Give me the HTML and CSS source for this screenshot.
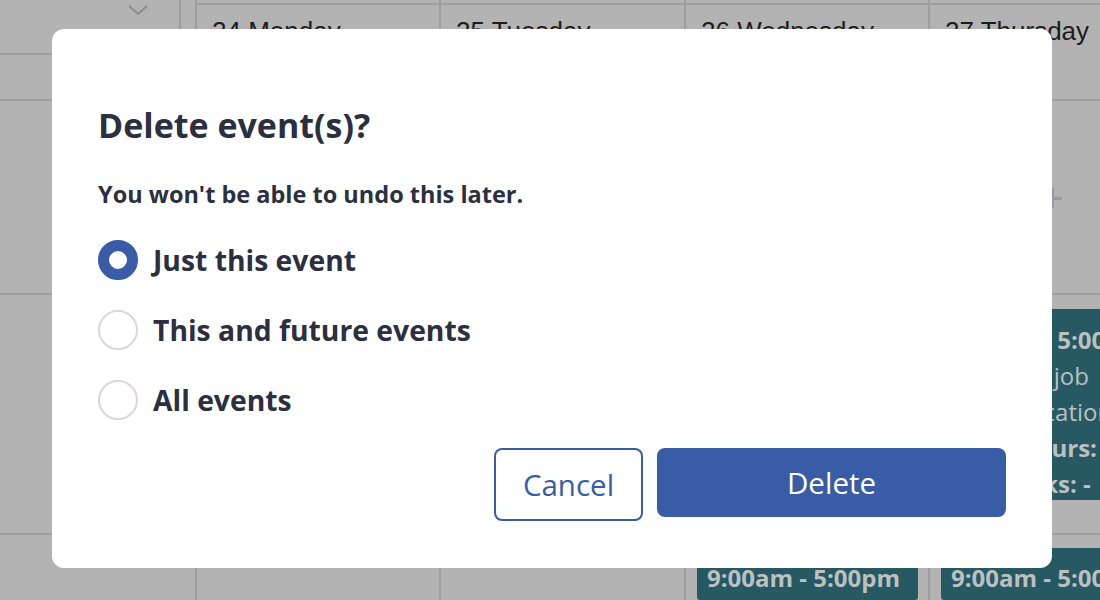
FILE: index.html
```html
<!DOCTYPE html>
<html lang="en">
<head>
<meta charset="utf-8">
<title>Delete event(s)?</title>
<link rel="stylesheet" href="styles.css">
</head>
<body>
<div class="cal">
  <div class="timecol">
    <div class="time-head">
      <div class="time-head-top">
        <svg class="chevron" width="22" height="14" viewBox="0 0 22 14"><polyline points="2,3 11,11 20,3" fill="none" stroke="#8c8c8c" stroke-width="2"/></svg>
      </div>
    </div>
    <div class="cell cell-a"></div>
    <div class="cell cell-b"></div>
  </div>
  <div class="spacer"></div>
  <div class="day w244">
    <div class="day-head">24 Monday</div>
    <div class="cell cell-a"></div>
    <div class="cell cell-b"></div>
    <div class="cell cell-c"></div>
  </div>
  <div class="day w245">
    <div class="day-head">25 Tuesday</div>
    <div class="cell cell-a"></div>
    <div class="cell cell-b"></div>
    <div class="cell cell-c"></div>
  </div>
  <div class="day w244">
    <div class="day-head">26 Wednesday</div>
    <div class="cell cell-a"></div>
    <div class="cell cell-b"></div>
    <div class="cell cell-c">
      <div class="event"><div class="ev-b">9:00am - 5:00pm</div></div>
    </div>
  </div>
  <div class="day w245">
    <div class="day-head">27 Thursday</div>
    <div class="cell cell-a"><span class="plus"></span></div>
    <div class="cell cell-b">
      <div class="event tall">
        <div class="ev-b">9:00am - 5:00pm</div>
        <div class="ev-r">Cleaning job</div>
        <div class="ev-r">Office location</div>
        <div class="ev-b">Total Hours: 8</div>
        <div class="ev-b">All breaks: -</div>
      </div>
    </div>
    <div class="cell cell-c">
      <div class="event"><div class="ev-b">9:00am - 5:00pm</div></div>
    </div>
  </div>
</div>

<div class="modal">
  <h1 class="title">Delete event(s)?</h1>
  <p class="subtitle">You won't be able to undo this later.</p>
  <div class="options">
    <label class="option"><span class="radio checked"></span><span class="opt-label">Just this event</span></label>
    <label class="option"><span class="radio"></span><span class="opt-label">This and future events</span></label>
    <label class="option"><span class="radio"></span><span class="opt-label">All events</span></label>
  </div>
  <div class="actions">
    <button class="btn btn-cancel">Cancel</button>
    <button class="btn btn-delete">Delete</button>
  </div>
</div>
</body>
</html>
```
FILE: styles.css
```css
* { box-sizing: border-box; }
html, body {
  margin: 0;
  padding: 0;
}
body {
  width: 1100px;
  height: 600px;
  overflow: hidden;
  background: #b3b3b3;
  position: relative;
  font-family: "Open Sans", "Noto Sans", sans-serif;
}

/* background calendar (dimmed) */
.cal {
  display: flex;
  height: 600px;
}
.timecol { width: 181px; flex: none; display: flex; flex-direction: column; }
.time-head {
  height: 101px;
  border-right: 2px solid #9e9e9e;
  border-bottom: 2px solid #9e9e9e;
}
.time-head-top {
  height: 55px;
  border-bottom: 2px solid #9e9e9e;
  position: relative;
}
.chevron { position: absolute; left: 127px; top: 3px; }
.spacer { width: 16px; flex: none; border-right: 2px solid #9e9e9e; }
.day { flex: none; display: flex; flex-direction: column; border-right: 2px solid #9e9e9e; overflow: hidden; }
.w244 { width: 244px; }
.w245 { width: 245px; }
.day-head {
  height: 98px;
  margin-top: 3px;
  border-top: 2px solid #9e9e9e;
  border-bottom: 2px solid #9e9e9e;
  padding: 11px 0 0 15px;
  font-family: "Liberation Sans", Arial, sans-serif;
  font-size: 26px;
  line-height: 30px;
  color: #1c1c1c;
  white-space: nowrap;
  overflow: hidden;
}
.cell { border-bottom: 2px solid #9e9e9e; padding: 14px 10px 0 11px; position: relative; }
.cell-a { height: 194px; }
.cell-b { height: 240px; }
.cell-c { flex: 1; border-bottom: none; padding-top: 13px; }
.plus {
  position: absolute;
  left: 112px;
  top: 87px;
  width: 20px;
  height: 20px;
}
.plus::before, .plus::after {
  content: "";
  position: absolute;
  background: #9899a3;
}
.plus::before { left: 9px; top: 0; width: 3px; height: 20px; }
.plus::after { left: 0; top: 9px; width: 20px; height: 3px; }

.event {
  background: #265961;
  border-radius: 3px;
  padding: 12px 10px 0 10px;
  color: #bcc0c1;
  font-size: 24px;
  line-height: 36px;
  white-space: nowrap;
  overflow: hidden;
  height: 100%;
}
.event.tall { height: 191px; padding-top: 13px; }
.ev-b { font-weight: 700; }
.ev-r { font-weight: 400; }

/* modal */
.modal {
  position: absolute;
  left: 52px;
  top: 29px;
  width: 1000px;
  height: 539px;
  background: #ffffff;
  border-radius: 12px;
  padding: 74px 46px 0 46px;
  color: #2b2f3e;
}
.title {
  margin: 0;
  font-size: 34px;
  line-height: 44px;
  font-weight: 700;
}
.subtitle {
  margin: 31px 0 0 0;
  font-size: 23.5px;
  line-height: 32px;
  font-weight: 700;
}
.options {
  margin-top: 30px;
  display: flex;
  flex-direction: column;
  gap: 30px;
}
.option {
  display: flex;
  align-items: center;
  gap: 15px;
  height: 40px;
}
.radio {
  width: 40px;
  height: 40px;
  border-radius: 50%;
  border: 2px solid #dcd7d7;
  background: #fff;
  flex: none;
}
.radio.checked { border: 11px solid #385ca5; }
.opt-label {
  font-size: 28.3px;
  line-height: 40px;
  font-weight: 700;
}
.actions {
  margin-top: 28px;
  display: flex;
  justify-content: flex-end;
  align-items: flex-start;
  gap: 14px;
}
.btn {
  font-family: "Open Sans", "Noto Sans", sans-serif;
  font-size: 29.5px;
  font-weight: 400;
  border-radius: 8px;
  display: flex;
  align-items: center;
  justify-content: center;
  padding: 0;
  cursor: pointer;
}
.btn-cancel {
  width: 149px;
  height: 73px;
  background: #fff;
  color: #385ca5;
  border: 2px solid #385ca5;
}
.btn-delete {
  width: 349px;
  height: 69px;
  background: #385ca5;
  color: #fff;
  border: none;
}
```
